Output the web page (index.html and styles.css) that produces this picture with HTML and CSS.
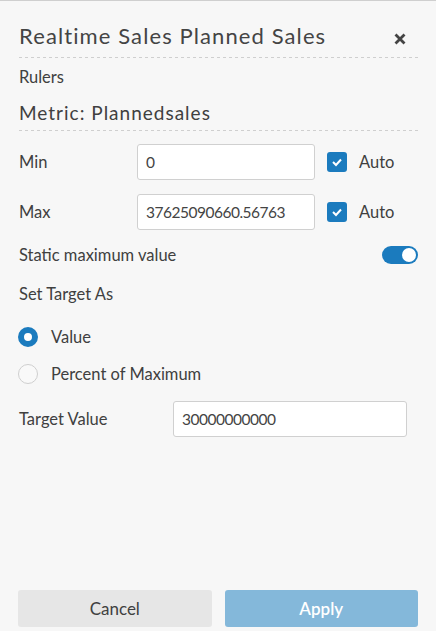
FILE: index.html
```html
<!DOCTYPE html>
<html>
<head>
<meta charset="utf-8">
<link rel="stylesheet" href="styles.css">
</head>
<body>
<div class="panel">
  <div class="header">
    <h1 class="title">Realtime Sales Planned Sales</h1>
    <button class="close" aria-label="Close">
      <svg width="12" height="12" viewBox="0 0 12 12"><path d="M1.5 1.5 L10.5 10.5 M10.5 1.5 L1.5 10.5" stroke="#444" stroke-width="2.8" stroke-linecap="butt"/></svg>
    </button>
  </div>
  <div class="section-label">Rulers</div>
  <div class="metric">Metric: Plannedsales</div>

  <div class="form">
    <div class="row">
      <span class="label">Min</span>
      <div class="input minmax">0</div>
      <span class="check"><svg width="12" height="10" viewBox="0 0 12 10"><path d="M2 5 L5 8 L10 2.5" fill="none" stroke="#fff" stroke-width="2"/></svg></span>
      <span class="check-label">Auto</span>
    </div>
    <div class="row">
      <span class="label">Max</span>
      <div class="input minmax">37625090660.56763</div>
      <span class="check"><svg width="12" height="10" viewBox="0 0 12 10"><path d="M2 5 L5 8 L10 2.5" fill="none" stroke="#fff" stroke-width="2"/></svg></span>
      <span class="check-label">Auto</span>
    </div>
    <div class="row toggle-row">
      <span class="toggle-label">Static maximum value</span>
      <span class="toggle"><span class="knob"></span></span>
    </div>
    <div class="set-target">Set Target As</div>
    <div class="radio-row">
      <span class="radio on"></span><span>Value</span>
    </div>
    <div class="radio-row">
      <span class="radio"></span><span>Percent of Maximum</span>
    </div>
    <div class="row target-row">
      <span class="label target-label">Target Value</span>
      <div class="input target">30000000000</div>
    </div>
  </div>

  <div class="footer">
    <button class="btn cancel">Cancel</button>
    <button class="btn apply">Apply</button>
  </div>
</div>
</body>
</html>
```

FILE: styles.css
```css
html, body {
  margin: 0;
  height: 100%;
}
body {
  background: #f7f7f7;
  border-top: 1px solid #cfcfcf;
  box-sizing: border-box;
  font-family: Lato, "Open Sans", sans-serif;
  color: #404040;
}
.panel {
  height: 100%;
  display: flex;
  flex-direction: column;
  padding: 0 18px 0 19px;
  box-sizing: border-box;
}
.header {
  display: flex;
  align-items: center;
  justify-content: space-between;
  height: 57px;
  background: repeating-linear-gradient(to right, #cfcfcf 0 3px, transparent 3px 6px) bottom left / 100% 1px no-repeat;
}
.title {
  margin: 0;
  padding-top: 12px;
  font-size: 22px;
  font-weight: 400;
  letter-spacing: 1.1px;
  color: #444;
  white-space: nowrap;
}
.close {
  border: 0;
  background: transparent;
  padding: 0;
  margin: 18px 12px 0 0;
  width: 12px;
  height: 12px;
  display: flex;
}
.section-label {
  font-size: 16.5px;
  margin-top: 9px;
  line-height: 20px;
}
.metric {
  font-size: 19px;
  letter-spacing: 1px;
  line-height: 24px;
  margin-top: 14px;
  padding-bottom: 6px;
  background: repeating-linear-gradient(to right, #cfcfcf 0 3px, transparent 3px 6px) bottom left / 100% 1px no-repeat;
}
.form {
  display: flex;
  flex-direction: column;
  font-size: 16.5px;
}
.row {
  display: flex;
  align-items: center;
  line-height: 20px;
}
.row:first-child {
  margin-top: 13px;
}
.row + .row {
  margin-top: 14px;
}
.label {
  width: 118px;
  flex: none;
}
.input {
  box-sizing: border-box;
  height: 36px;
  border: 1px solid #d0d0d0;
  border-radius: 3px;
  background: #fff;
  display: flex;
  align-items: center;
  padding: 0 8px;
  font-size: 15.5px;
  letter-spacing: -0.5px;
  color: #444;
}
.minmax {
  width: 178px;
}
.check {
  width: 20px;
  height: 20px;
  border-radius: 3px;
  background: #1b7bbe;
  margin-left: 12px;
  display: flex;
  align-items: center;
  justify-content: center;
}
.check-label {
  margin-left: 12px;
}
.toggle-row {
  justify-content: space-between;
}
.row.toggle-row {
  margin-top: 15px;
}
.toggle-label {
  white-space: nowrap;
}
.toggle {
  width: 36px;
  height: 18px;
  border-radius: 9px;
  background: #1b7bbe;
  display: flex;
  align-items: center;
  justify-content: flex-end;
  padding: 0 2px;
  box-sizing: border-box;
}
.knob {
  width: 14px;
  height: 14px;
  border-radius: 50%;
  background: #fff;
}
.set-target {
  margin-top: 19px;
  line-height: 20px;
}
.radio-row {
  display: flex;
  align-items: center;
  line-height: 20px;
  margin-left: -1px;
}
.set-target + .radio-row {
  margin-top: 23px;
}
.radio-row + .radio-row {
  margin-top: 17px;
}
.radio {
  box-sizing: border-box;
  width: 20px;
  height: 20px;
  border-radius: 50%;
  border: 1px solid #cfcfcf;
  background: #f9f9f9;
  margin-right: 13px;
}
.radio.on {
  border: 6.5px solid #1b7bbe;
  background: #fff;
}
.row.target-row {
  margin-top: 17px;
}
.target-label {
  width: 154px;
}
.target {
  width: 234px;
}
.footer {
  margin-top: auto;
  display: flex;
  gap: 13px;
  padding-bottom: 4px;
  margin-left: -1px;
}
.btn {
  flex: 1;
  height: 37px;
  border: 0;
  border-radius: 3px;
  font-family: Lato, "Open Sans", sans-serif;
  font-size: 17px;
}
.cancel {
  background: #e6e6e6;
  color: #404040;
}
.apply {
  background: #84b8da;
  color: #fff;
  font-weight: 600;
}
```
